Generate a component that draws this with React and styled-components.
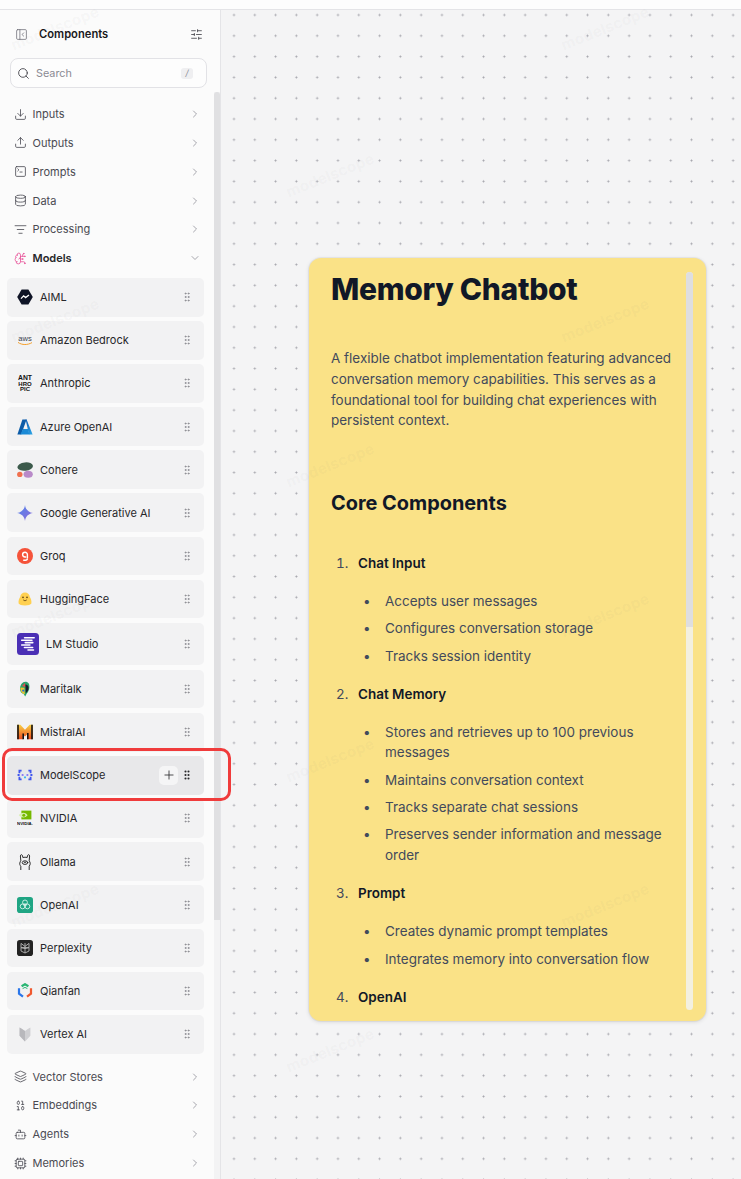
import React from 'react';
import styled, { createGlobalStyle } from 'styled-components';
import {
  Bot, ChevronDown, ChevronRight, Cpu, Database, Download, GripVertical, Layers, ListFilter,
  PanelLeftClose, Plus, Search, SlidersHorizontal, SquareTerminal, Upload, Binary, BrainCircuit,
} from 'lucide-react';

const GlobalStyle = createGlobalStyle`
  html, body { margin: 0; padding: 0; height: 100%; }
  body { font-family: Inter, "Liberation Sans", sans-serif; background: #fff; overflow: hidden; }
`;

// little brand logos, all drawn on a 16x16 box
const Logos = {
  aiml: (
    <>
      <path d="M4.6 .6h6.8L15.8 8l-4.4 7.4H4.6L.2 8z" fill="#0f1426" />
      <path d="M4 9.6l2.6-2.8 2 1.8L12 6" fill="none" stroke="#fff" strokeWidth="1.3" />
    </>
  ),
  aws: (
    <>
      <text x="8" y="8.6" textAnchor="middle" fontSize="7.6" fontFamily="Liberation Sans" fill="#3b4450">aws</text>
      <path d="M1 10.4c4 2.8 9.6 2.8 14 .2" fill="none" stroke="#f5a02c" strokeWidth="1" />
    </>
  ),
  anthropic: (
    <text fontFamily="Liberation Sans" fontWeight="700" fill="#111" textAnchor="middle">
      <tspan x="8" y="5.2" fontSize="6.8">ANT</tspan>
      <tspan x="8" y="10.6" fontSize="6">HRO</tspan>
      <tspan x="8" y="15.8" fontSize="6">PIC</tspan>
    </text>
  ),
  azure: (
    <>
      <defs>
        <linearGradient id="az" x1="0" y1="0" x2="1" y2="1">
          <stop offset="0" stopColor="#0f5db5" />
          <stop offset="1" stopColor="#2da8e8" />
        </linearGradient>
      </defs>
      <path d="M5.4 .6h4.2L4.2 15.4H.4z" fill="#0a5ba8" />
      <path d="M9.6 .6h-1L12 15.4h3.6z" fill="url(#az)" />
      <path d="M6 10h5l1.4 5.4H3.4z" fill="#1b8ad6" />
    </>
  ),
  cohere: (
    <>
      <ellipse cx="8.2" cy="4.6" rx="7.8" ry="4.2" fill="#3c5a4b" transform="rotate(-6 8 4.6)" />
      <circle cx="2.8" cy="12.4" r="2.7" fill="#f0704f" />
      <ellipse cx="11.2" cy="12.2" rx="4.6" ry="3.5" fill="#b98ac9" />
    </>
  ),
  google: (
    <>
      <defs>
        <linearGradient id="gm" x1="0" y1="0" x2="1" y2="1">
          <stop offset="0" stopColor="#4f86ee" />
          <stop offset="1" stopColor="#8f6bd8" />
        </linearGradient>
      </defs>
      <path d="M8 0c.5 4.4 3.4 7.4 8 8-4.6.6-7.5 3.6-8 8-.5-4.4-3.4-7.4-8-8 4.6-.6 7.5-3.6 8-8z" fill="url(#gm)" />
    </>
  ),
  groq: (
    <>
      <circle cx="8" cy="8" r="8" fill="#f5533a" />
      <path d="M10.4 10V6.6a2.4 2.4 0 1 0-2.4 2.4h1.2M6.2 12.2h2.2a2 2 0 0 0 2-2" fill="none" stroke="#fff" strokeWidth="1.4" />
    </>
  ),
  hf: (
    <>
      <path d="M1.6 12.6C1.2 9.4 2.4 7 3.2 6c.3-3 2.2-4.6 4.8-4.6S12.5 3 12.8 6c.8 1 2 3.4 1.6 6.6-.9 1.4-3 1.8-6.4 1.8s-5.5-.4-6.4-1.8z" fill="#ffd050" />
      <circle cx="6" cy="6.4" r=".8" fill="#5a3d10" />
      <circle cx="10" cy="6.4" r=".8" fill="#5a3d10" />
      <path d="M6.2 8.8c1 1.2 2.6 1.2 3.6 0" fill="none" stroke="#5a3d10" strokeWidth=".8" />
    </>
  ),
  lm: (
    <>
      <rect width="16" height="16" rx="2.6" fill="#4a2fb5" />
      <g stroke="#fff" strokeWidth="1.1" strokeLinecap="round">
        <path d="M5.5 3.4h7M3.4 5.2h7.5M6 7h5.5" />
        <path d="M3.4 8.8h6M5.4 10.6h6M8 12.4h4" />
      </g>
    </>
  ),
  maritalk: (
    <>
      <path d="M8.4 .8c3 0 4.2 2.4 4 5.4-.2 3.2-1.4 5-2.6 6.2L8.2 15.4 6.6 13C4.4 12.4 3 10.6 3 8c0-4 2.4-7.2 5.4-7.2z" fill="#2aa36b" />
      <path d="M3.4 6.4l4 .4.4 6.4C5 12.6 3.2 10 3.4 6.4z" fill="#f2c62f" />
      <path d="M5 5l3-3 .4 4z" fill="#e5484d" />
      <path d="M8.4 3.4c2 0 3.2 1.4 3.2 3.4s-1 4-2.8 5.4z" fill="#191b2a" />
      <circle cx="6.2" cy="9.6" r="1.1" fill="#2f6fd6" />
    </>
  ),
  mistral: (
    <>
      <defs>
        <linearGradient id="mi" x1="0" y1="0" x2="0" y2="1">
          <stop offset="0" stopColor="#f7d046" />
          <stop offset="1" stopColor="#ee4c1e" />
        </linearGradient>
      </defs>
      <path d="M.2 .8h3.2l4.6 5 4.6-5h3.2v14.4h-5.6v-5L8 12.4 5.8 10.2v5H.2z" fill="url(#mi)" />
      <path d="M.2 .8h1.6v14.4H.2zM14.2 .8h1.6v14.4h-1.6zM5.4 9.6h1.6v5.6H5.4zM10 9h1.6v6.2H10z" fill="#15120f" />
    </>
  ),
  modelscope: (
    <g fill="none" strokeWidth="1.8">
      <path d="M4.6 3.6H2.4v2.6M.6 8h2M2.4 9.8v2.6h2.2" stroke="#3f55ee" />
      <path d="M11.4 3.6h2.2v2.6M15.4 8h-2M13.6 9.8v2.6h-2.2" stroke="#3f55ee" />
      <path d="M5.6 7v2M10.4 7v2" stroke="#8a7cf6" />
      <path d="M7 10.4h2" stroke="#3fb8f0" />
    </g>
  ),
  nvidia: (
    <>
      <rect x="4.4" y=".6" width="10" height="8.8" fill="#76b900" />
      <path d="M1.8 5.2C4.6 2 8 2 10.6 5.2 8 8.2 4.6 8.2 1.8 5.2z" fill="#d9efb2" />
      <circle cx="6.8" cy="5.2" r="1.5" fill="#76b900" />
      <text x="8" y="14.6" textAnchor="middle" fontSize="4.3" fontWeight="700" fontFamily="Liberation Sans" fill="#111">NVIDIA.</text>
    </>
  ),
  ollama: (
    <g fill="none" stroke="#1a1a1a" strokeWidth=".9" strokeLinecap="round">
      <path d="M3.8 15.6v-3.4c-.9-1-1.2-2-1-3.2.1-1 .7-1.6 1-2.2L3.4 2c0-1.4 1.4-1.8 2-.6l.5 2.2c1.3-.5 3-.5 4.2 0l.5-2.2c.6-1.2 2-.8 2 .6l-.4 4.8c.4.8 1 1.4 1 2.4.1 1.1-.3 2.2-1 3v3.4" />
      <ellipse cx="8" cy="8.6" rx="2.8" ry="1.8" />
      <path d="M7.3 8.3h1.4" />
    </g>
  ),
  openai: (
    <>
      <rect width="16" height="16" rx="2.8" fill="#1fa583" />
      <g fill="none" stroke="#d8f3ea" strokeWidth=".9">
        <circle cx="8" cy="5.4" r="2.4" />
        <circle cx="5.6" cy="9.4" r="2.4" />
        <circle cx="10.4" cy="9.4" r="2.4" />
        <circle cx="8" cy="8" r="1.2" />
      </g>
    </>
  ),
  perplexity: (
    <>
      <rect width="16" height="16" rx="2.8" fill="#222222" />
      <g fill="none" stroke="#b5b5b5" strokeWidth=".9">
        <path d="M4 3.4l4 3 4-3v4.2H4zM4 7.6l4 1 4-1v3.4l-4 2-4-2z" />
        <path d="M8 3v10" />
      </g>
    </>
  ),
  qianfan: (
    <g fill="none" strokeWidth="2.2">
      <path d="M4.6 3.2L8 1.2l3.4 2" stroke="#2ab673" />
      <path d="M2 5.2v5.4l4 3" stroke="#2a76ea" />
      <path d="M14 5.2v5.4l-4 3" stroke="#f0582e" />
      <path d="M5.6 5.6L8 4.4l2.4 1.2" stroke="#2ab673" strokeWidth="1" />
    </g>
  ),
  vertex: (
    <>
      <path d="M2.6 1.6l2.6 1.5L8 5l2.8-1.9 2.6-1.5v8.2L8 15.4 2.6 9.8z" fill="#d0d0d3" />
      <path d="M8 5v10.4L2.6 9.8V1.6z" fill="#b8b8bc" />
    </>
  ),
};

const Logo = ({ name, size = 16 }) => (
  <LogoBox $size={size}>
    <svg width={size} height={size} viewBox="0 0 16 16">{Logos[name]}</svg>
  </LogoBox>
);

const topCategories = [
  { label: 'Inputs', Icon: Download },
  { label: 'Outputs', Icon: Upload },
  { label: 'Prompts', Icon: SquareTerminal },
  { label: 'Data', Icon: Database },
  { label: 'Processing', Icon: ListFilter },
];

const bottomCategories = [
  { label: 'Vector Stores', Icon: Layers },
  { label: 'Embeddings', Icon: Binary },
  { label: 'Agents', Icon: Bot },
  { label: 'Memories', Icon: Cpu },
];

const models = [
  { label: 'AIML', logo: 'aiml' },
  { label: 'Amazon Bedrock', logo: 'aws' },
  { label: 'Anthropic', logo: 'anthropic' },
  { label: 'Azure OpenAI', logo: 'azure' },
  { label: 'Cohere', logo: 'cohere' },
  { label: 'Google Generative AI', logo: 'google' },
  { label: 'Groq', logo: 'groq' },
  { label: 'HuggingFace', logo: 'hf' },
  { label: 'LM Studio', logo: 'lm', big: true },
  { label: 'Maritalk', logo: 'maritalk' },
  { label: 'MistralAI', logo: 'mistral' },
  { label: 'ModelScope', logo: 'modelscope', active: true },
  { label: 'NVIDIA', logo: 'nvidia' },
  { label: 'Ollama', logo: 'ollama' },
  { label: 'OpenAI', logo: 'openai' },
  { label: 'Perplexity', logo: 'perplexity' },
  { label: 'Qianfan', logo: 'qianfan' },
  { label: 'Vertex AI', logo: 'vertex' },
];

const watermarks = [
  [55, 28], [330, 175], [605, 28], [55, 320], [330, 465], [605, 320],
  [55, 615], [330, 760], [605, 615], [55, 905], [330, 1050], [605, 905],
];

function Category({ label, Icon }) {
  return (
    <CategoryRow>
      <Icon size={13} strokeWidth={1.5} />
      <CategoryLabel>{label}</CategoryLabel>
      <ChevronRight size={12} strokeWidth={1.5} color="#8a8a93" />
    </CategoryRow>
  );
}

export default function App() {
  return (
    <Page>
      <GlobalStyle />
      <TopStrip />
      <Main>
        <Sidebar>
          <Header>
            <HeaderTitle>
              <PanelLeftClose size={13} strokeWidth={1.4} color="#6b6b74" />
              <span>Components</span>
            </HeaderTitle>
            <SlidersHorizontal size={13} strokeWidth={1.5} color="#3f3f46" />
          </Header>
          <SearchBox>
            <Search size={13} strokeWidth={1.6} color="#3f3f46" />
            <SearchText>Search</SearchText>
            <SlashKey>/</SlashKey>
          </SearchBox>
          <CategoryList>
            {topCategories.map((c) => <Category key={c.label} {...c} />)}
            <CategoryRow $open>
              <BrainCircuit size={13} strokeWidth={1.5} color="#e8559a" />
              <CategoryLabel>Models</CategoryLabel>
              <ChevronDown size={12} strokeWidth={1.5} color="#8a8a93" />
            </CategoryRow>
          </CategoryList>
          <ModelList>
            {models.map((m) => (
              <ModelRow key={m.label} $active={m.active} $big={m.big}>
                <Logo name={m.logo} size={m.big ? 22 : 16} />
                <ModelName>{m.label}</ModelName>
                {m.active && (
                  <AddButton>
                    <Plus size={14} strokeWidth={1.4} />
                  </AddButton>
                )}
                <GripVertical size={12} strokeWidth={m.active ? 2.2 : 1.7} color={m.active ? '#27272a' : '#85858d'} />
              </ModelRow>
            ))}
          </ModelList>
          <CategoryList $bottom>
            {bottomCategories.map((c) => <Category key={c.label} {...c} />)}
          </CategoryList>
          <SideScrollTrack><SideScrollThumb /></SideScrollTrack>
        </Sidebar>
        <Canvas>
          <Note>
            <NoteTitle>Memory Chatbot</NoteTitle>
            <NoteText>
              A flexible chatbot implementation featuring advanced conversation memory
              capabilities. This serves as a foundational tool for building chat experiences
              with persistent context.
            </NoteText>
            <NoteHeading>Core Components</NoteHeading>
            <Steps>
              <Step>
                <strong>Chat Input</strong>
                <Bullets>
                  <li>Accepts user messages</li>
                  <li>Configures conversation storage</li>
                  <li>Tracks session identity</li>
                </Bullets>
              </Step>
              <Step>
                <strong>Chat Memory</strong>
                <Bullets>
                  <li>Stores and retrieves up to 100 previous messages</li>
                  <li>Maintains conversation context</li>
                  <li>Tracks separate chat sessions</li>
                  <li>Preserves sender information and message order</li>
                </Bullets>
              </Step>
              <Step>
                <strong>Prompt</strong>
                <Bullets>
                  <li>Creates dynamic prompt templates</li>
                  <li>Integrates memory into conversation flow</li>
                </Bullets>
              </Step>
              <Step>
                <strong>OpenAI</strong>
              </Step>
            </Steps>
            <NoteScrollTrack><NoteScrollThumb /></NoteScrollTrack>
          </Note>
        </Canvas>
      </Main>
      <Highlight />
      {watermarks.map(([x, y]) => (
        <Watermark key={`${x}-${y}`} $x={x} $y={y}>modelscope</Watermark>
      ))}
    </Page>
  );
}

const Page = styled.div`
  position: relative;
  width: 741px;
  height: 1179px;
  overflow: hidden;
  display: flex;
  flex-direction: column;
`;

const TopStrip = styled.div`
  height: 9px;
  flex: none;
  background: #fdfdfd;
  border-bottom: 1px solid #e4e4e7;
`;

const Main = styled.div`
  flex: 1;
  display: flex;
  min-height: 0;
`;

const Sidebar = styled.aside`
  position: relative;
  width: 220px;
  flex: none;
  background: #fbfbfb;
  box-sizing: border-box;
  overflow: hidden;
`;

const Header = styled.div`
  height: 48px;
  box-sizing: border-box;
  padding: 0 17px 0 15px;
  display: flex;
  align-items: center;
  justify-content: space-between;
`;

const HeaderTitle = styled.div`
  display: flex;
  align-items: center;
  gap: 11px;
  font-size: 11.2px;
  font-weight: 600;
  color: #18181b;
`;

const SearchBox = styled.div`
  margin: 0 13px 0 10px;
  height: 30px;
  box-sizing: border-box;
  border: 1px solid #e2e2e6;
  border-radius: 8px;
  background: #fdfdfd;
  padding: 0 13px 0 6px;
  display: flex;
  align-items: center;
  gap: 6px;
`;

const SearchText = styled.span`
  flex: 1;
  font-size: 10.8px;
  color: #8a8a93;
`;

const SlashKey = styled.span`
  width: 12px;
  height: 11px;
  border-radius: 3px;
  background: #efeff1;
  color: #8a8a93;
  font-size: 8.5px;
  font-style: italic;
  text-align: center;
  line-height: 11px;
`;

const CategoryList = styled.div`
  margin-top: ${(p) => (p.$bottom ? '8.6px' : '11.6px')};
  display: flex;
  flex-direction: column;
`;

const CategoryRow = styled.div`
  height: 28.85px;
  padding: 0 19px 0 14px;
  display: flex;
  align-items: center;
  gap: 5.5px;
  color: ${(p) => (p.$open ? '#27272a' : '#4a4a52')};
  font-weight: ${(p) => (p.$open ? 600 : 400)};
`;

const CategoryLabel = styled.span`
  flex: 1;
  font-size: 11px;
`;

const ModelList = styled.div`
  margin: 5.1px 16px 0 7px;
  display: flex;
  flex-direction: column;
  gap: 4.4px;
`;

const ModelRow = styled.div`
  height: ${(p) => (p.$big ? '42.4px' : '38.76px')};
  box-sizing: border-box;
  padding: 0 11px 0 10px;
  border-radius: 5px;
  background: ${(p) => (p.$active ? '#e8e8ea' : '#f2f2f3')};
  display: flex;
  align-items: center;
  gap: 7px;
`;

const LogoBox = styled.span`
  width: ${(p) => p.$size}px;
  height: ${(p) => p.$size}px;
  flex: none;
  display: flex;
`;

const ModelName = styled.span`
  flex: 1;
  font-size: 11px;
  color: #27272a;
  white-space: nowrap;
`;

const AddButton = styled.span`
  width: 19px;
  height: 19px;
  margin-right: -4px;
  border-radius: 5px;
  background: #f5f5f6;
  color: #27272a;
  display: flex;
  align-items: center;
  justify-content: center;
`;

const SideScrollTrack = styled.div`
  position: absolute;
  top: 82px;
  bottom: 0;
  right: 0;
  width: 6px;
  background: #f3f3f4;
`;

const SideScrollThumb = styled.div`
  height: 828px;
  background: #e0e0e2;
  border-radius: 3px 3px 0 0;
`;

const Canvas = styled.main`
  flex: 1;
  min-width: 0;
  box-sizing: border-box;
  border-left: 1px solid #e4e4e7;
  padding: 248px 0 0 88px;
  background-color: #f4f4f5;
  background-image: radial-gradient(circle, #a4a4ab 0.8px, transparent 1.2px);
  background-size: 20.8px 20.8px;
  background-position: 2.6px -5.4px;
`;

const Note = styled.section`
  position: relative;
  width: 396.5px;
  height: 763px;
  box-sizing: border-box;
  padding: 12.5px 29.5px 0 22px;
  overflow: hidden;
  border-radius: 12px;
  background: #fae287;
  box-shadow: 0 0 0 1px rgba(0, 0, 0, 0.04), 0 1px 4px rgba(0, 0, 0, 0.12);
  color: #434a5c;
  font-size: 13.48px;
  line-height: 20.8px;
`;

const NoteTitle = styled.h1`
  margin: 0 0 40.5px;
  font-size: 30px;
  line-height: 37px;
  font-weight: 800;
  letter-spacing: -0.3px;
  color: #111827;
`;

const NoteText = styled.p`
  margin: 0;
`;

const NoteHeading = styled.h2`
  margin: 58px 0 35.6px;
  font-size: 19.9px;
  line-height: 28px;
  font-weight: 700;
  color: #111827;
`;

const Steps = styled.ol`
  margin: 0;
  padding: 0 0 0 27px;
  strong { font-weight: 600; color: #111827; }
`;

const Step = styled.li`
  margin-bottom: 17.2px;
  &::marker { content: counter(list-item) ".\\00a0\\00a0\\2009"; }
`;

const Bullets = styled.ul`
  margin: 17.2px 0 0;
  padding: 0 0 0 27px;
  list-style-type: disc;
  li { margin-bottom: 6.6px; }
  li::marker { content: "•\\00a0\\00a0\\00a0\\00a0"; }
  li:last-child { margin-bottom: 0; }
`;

const NoteScrollTrack = styled.div`
  position: absolute;
  top: 13.5px;
  right: 12.5px;
  width: 7px;
  height: 738px;
  border-radius: 4px;
  background: #f3f0e0;
  overflow: hidden;
`;

const NoteScrollThumb = styled.div`
  height: 355px;
  background: #dedee0;
`;

const Highlight = styled.div`
  position: absolute;
  left: 2px;
  top: 748px;
  width: 229px;
  height: 53px;
  box-sizing: border-box;
  border: 3px solid #f03b3b;
  border-radius: 10px;
  pointer-events: none;
`;

const Watermark = styled.span`
  position: absolute;
  left: ${(p) => p.$x}px;
  top: ${(p) => p.$y}px;
  transform: translate(-50%, -50%) rotate(-22deg);
  font-size: 15px;
  font-weight: 700;
  letter-spacing: 0.3px;
  color: rgba(120, 120, 120, 0.05);
  pointer-events: none;
  white-space: nowrap;
`;
